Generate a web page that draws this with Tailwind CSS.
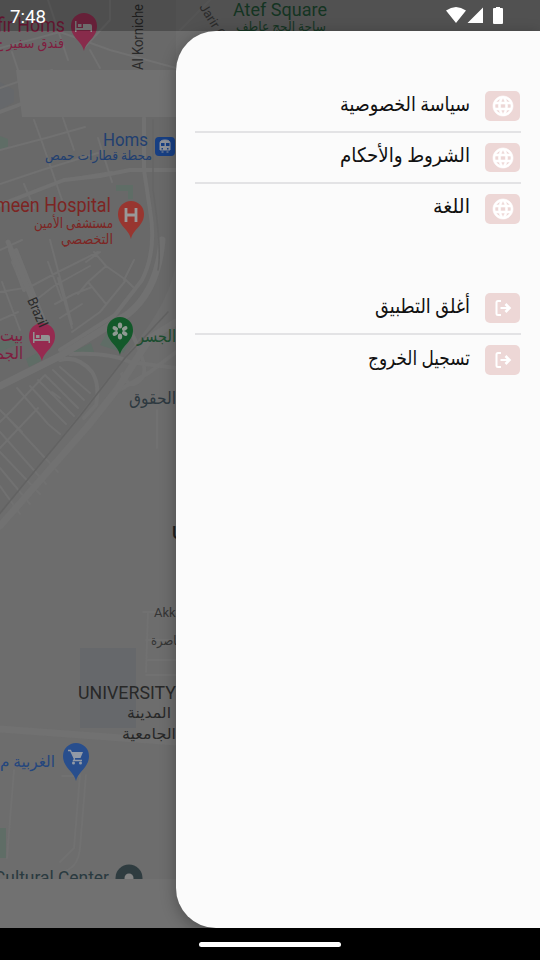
<!DOCTYPE html>
<html lang="ar">
<head>
<meta charset="utf-8">
<meta name="viewport" content="width=device-width, initial-scale=1">
<title>القائمة</title>
<script src="https://cdn.jsdelivr.net/npm/@tailwindcss/browser@4"></script>
</head>
<body class="bg-black">
<div class="relative flex h-[960px] w-[540px] flex-col overflow-hidden bg-black font-['Roboto','DejaVu_Sans',sans-serif]">
  <!-- dimmed map -->
  <svg class="absolute left-0 top-0 h-[928px] w-[540px]" viewBox="0 0 540 928">
    <defs>
      <clipPath id="mapclip"><rect width="540" height="879"/></clipPath>
      <path id="pin" d="M0 0C-2-10-13-13-13-25a13 13 0 0 1 26 0C13-13 2-10 0 0Z"/>
    </defs>
    <rect width="540" height="928" fill="#6d6d6d"/>
    <g clip-path="url(#mapclip)">
      <path d="M0 0H176V260Q172 300 130 350L0 515Z" fill="#696969"/>
      <path d="M80 648h56v80H80ZM0 82l14 8v12L0 110Z" fill="#66686b"/>
      <g fill="#5f6d66"><path d="M0 136l8 3v9l-8 2zM116 185h17v14h-5v-8h-12zM0 342l10-4 8 6-18 8zM26 359l11-6 4 8-12 6zM72 352l19-9 3 9zM100 345l8-14 20 12-4 10z"/><path d="M0 828h6v30H0z"/></g>
      <g fill="none" stroke="#717171" stroke-linecap="round" stroke-linejoin="round">
        <g stroke-width="2">
          <path d="M0 48L60 32L110 50L176 68M0 88L52 70M48 0L68 60M84 48L110 20V0M90 50L100 68M12 52L20 76M180 30L210 0"/>
          <path d="M0 184L42 170L98 153M24 184L34 208M34 120L42 142L62 200M63 118L74 150M0 150L46 138L85 127M98 138L112 182M62 180L112 172"/>
          <path d="M0 250L22 240M12 262L24 290L58 272L98 252M0 292L24 288M36 300L54 286L90 266M48 262L62 300M50 240L72 324M58 278L72 328M94 252L106 266L126 280L134 288M106 266L88 282L78 294M88 282L106 304M100 252L86 262M55 304L74 294L92 287M60 318L82 304M126 280L100 312L72 332M134 260L124 280M0 320L18 312M2 282L20 330"/>
          <path d="M0 410L22 432M17 388L48 424L60 434M30 386L52 410L66 424M38 380L74 416M45 375L78 408M53 370L84 400M60 367L90 393M0 422L10 412L44 376M8 418L58 472M0 432L46 484M0 452L40 494M0 468L30 504M0 486L20 514M38 408L0 448M60 398L52 392"/>
          <path d="M157 410V448M143 612H176M148 612L146 672M148 660H176M146 640H176M146 675H176M14 770L7 858M86 775L80 848Q78 870 60 872M80 775L74 848L60 862M62 776H80"/>
        </g>
        <g stroke-width="4">
          <path d="M0 112L16 106L36 98M10 250L24 290M16 250L44 320M12 250L28 285M0 205L64 180L100 176L130 170H176M144 118V170L150 210Q157 250 142 280L115 315L60 350"/>
          <path d="M60 360Q78 355 92 372Q100 384 96 405L84 418M130 330Q150 368 142 378Q130 392 122 374M176 352L150 372L116 392"/>
          <path d="M70 354Q110 352 130 362L176 368"/>
        </g>
        <path d="M8 242L22 275L40 318" stroke-width="5"/>
        <path d="M162 240Q158 290 128 314L60 356L0 386M0 526L88 426L118 388L150 338L176 322M0 729L176 742" stroke-width="7"/>
        <path d="M-4 518L80 416L125 358L168 312" stroke="#626262" stroke-width="1.500"/>
        <path d="M153 120V190Q162 250 158 270" stroke="#656565" stroke-width="1.500"/>
      </g>
      <path d="M16 70H176V117H22Z" fill="#717171"/>

      <g fill="#7f1d3f">
        <text x="-3" y="32" font-size="20" textLength="68" lengthAdjust="spacingAndGlyphs">fir Homs</text>
        <text x="-5" y="48" font-size="14" textLength="69" lengthAdjust="spacingAndGlyphs">فندق سفير ح</text>
        <g fill="#882b4b"><use href="#pin" x="84" y="51"/></g>
        <g fill="#962a50"><use href="#pin" x="42" y="361"/></g>
        <text x="0" y="341" font-size="17" textLength="23" lengthAdjust="spacingAndGlyphs">بيت</text>
        <text x="-5" y="359" font-size="17" textLength="28" lengthAdjust="spacingAndGlyphs">الجم</text>
      </g>
      <g fill="#929292"><path id="bed" d="M75 21h1.500v7H83v-4h7q2 0 2 2v6h-1.500v-2h-14v2H75ZM78 24h3.500v3H78Z"/><use href="#bed" x="-42" y="311"/></g>
      <text transform="translate(143 70) rotate(-90)" font-size="14" fill="#292929" textLength="66" lengthAdjust="spacingAndGlyphs">Al Korniche</text>
      <text transform="translate(199 7) rotate(58)" font-size="13" fill="#3a3a3a">Jarir Q</text>
      <g fill="#1b462e">
        <text x="233" y="16" font-size="18.500" textLength="94" lengthAdjust="spacingAndGlyphs">Atef Square</text>
        <text x="236" y="31" font-size="13" textLength="90" lengthAdjust="spacingAndGlyphs">ساحة الحج عاطف</text>
      </g>
      <g fill="#213f70">
        <text x="103" y="146" font-size="18" textLength="45" lengthAdjust="spacingAndGlyphs">Homs</text>
        <text x="45" y="160" font-size="13" textLength="107" lengthAdjust="spacingAndGlyphs">محطة قطارات حمص</text>
      </g>
      <rect x="155" y="137" width="20" height="19" rx="4" fill="#173f83"/>
      <path d="M160 150V143Q160 140 165 140T170 143V150ZM161.500 152h2M166.500 152h2" fill="#8e9299" stroke="#8e9299"/>
      <path d="M161 143h3.500v3H161zM166 143h3.500v3H166zM161.500 148h1.500v1.500h-1.500zM167 148h1.500v1.500h-1.500z" fill="#173f83"/>
      <g fill="#7d2523">
        <text x="-5" y="212" font-size="20" textLength="116" lengthAdjust="spacingAndGlyphs">meen Hospital</text>
        <text x="34" y="228" font-size="14" textLength="79" lengthAdjust="spacingAndGlyphs">مستشفى الأمين</text>
        <text x="61" y="244" font-size="14" textLength="52" lengthAdjust="spacingAndGlyphs">التخصصي</text>
      </g>
      <use href="#pin" x="131" y="239" fill="#983630"/>
      <path d="M126 208V222M136 208V222M126 215H136" stroke="#999" stroke-width="2.800"/>
      <text transform="translate(27 300) rotate(66)" font-size="14" fill="#292929" textLength="31" lengthAdjust="spacingAndGlyphs">Brazil</text>
      <use href="#pin" x="120" y="355" fill="#13592a"/>
      <g fill="#8f9a92"><ellipse cx="120" cy="325.500" rx="2.200" ry="3"/><ellipse cx="120" cy="336.500" rx="2.200" ry="3"/><ellipse cx="115.300" cy="328.500" rx="3" ry="2" transform="rotate(30 115.300 328.500)"/><ellipse cx="124.700" cy="328.500" rx="3" ry="2" transform="rotate(-30 124.700 328.500)"/><ellipse cx="115.300" cy="333.500" rx="3" ry="2" transform="rotate(-30 115.300 333.500)"/><ellipse cx="124.700" cy="333.500" rx="3" ry="2" transform="rotate(30 124.700 333.500)"/></g>
      <text x="137" y="342" font-size="17" fill="#1c4d30" textLength="39" lengthAdjust="spacingAndGlyphs">الجسر</text>
      <text x="129" y="404" font-size="17" fill="#2d3940" textLength="47" lengthAdjust="spacingAndGlyphs">الحقوق</text>
      <text x="172" y="539" font-size="18" font-weight="500" fill="#202020">U</text>
      <text x="154" y="617" font-size="13" fill="#353535">Akka</text>
      <text x="151" y="645" font-size="12.500" fill="#353535" textLength="29" lengthAdjust="spacingAndGlyphs">ناصرة</text>
      <g fill="#282828">
        <text x="78" y="699" font-size="18.500" textLength="98" lengthAdjust="spacingAndGlyphs">UNIVERSITY</text>
        <text x="127" y="718" font-size="15" textLength="44" lengthAdjust="spacingAndGlyphs">المدينة</text>
        <text x="122" y="739" font-size="15" textLength="54" lengthAdjust="spacingAndGlyphs">الجامعية</text>
      </g>
      <text x="0" y="767" font-size="16" fill="#24467e" textLength="55" lengthAdjust="spacingAndGlyphs">الغربية م</text>
      <use href="#pin" x="76" y="781" fill="#284e8d"/>
      <path d="M68 750.500h2.500l4 8.500-1 1.500H82" fill="none" stroke="#929aa6" stroke-width="1.300"/><path d="M71.500 752H83l-2.500 6H74Z" fill="#929aa6"/><circle cx="73.500" cy="763" r="1.500" fill="#929aa6"/><circle cx="80.500" cy="763" r="1.500" fill="#929aa6"/>
      <text x="-6" y="884" font-size="18.500" fill="#2a3a40" textLength="115" lengthAdjust="spacingAndGlyphs">Cultural Center</text>
      <circle cx="129" cy="878" r="13.500" fill="#2f3c40"/><circle cx="129" cy="878" r="4.500" fill="#828282"/>
    </g>
    <rect y="879" width="540" height="49" fill="#717171"/>
    <rect width="540" height="31" fill="#000" fill-opacity=".25"/>
  </svg>

  <!-- status bar -->
  <header class="relative flex h-[31px] shrink-0 items-center justify-between pl-[10px] pr-[36px] text-white">
    <svg class="h-[31px] w-10" viewBox="0 0 40 31"><text x="0" y="23" font-size="18.500" fill="#fff" textLength="36" lengthAdjust="spacingAndGlyphs">7:48</text></svg>
    <svg class="h-[31px] w-[58px]" viewBox="446 0 58 31" fill="#fff"><path d="M446 10.500Q456 3.500 466 10.500L456 23ZM467.500 23L483 7.500V23ZM493 9q0-1 1-1h2V7h4v1h2q1 0 1 1v14q0 1-1 1h-8q-1 0-1-1Z"/></svg>
  </header>

  <!-- drawer -->
  <main class="relative ml-[176px] flex h-[897px] flex-col rounded-l-[40px] bg-[#fbfbfb] pl-[19px] pr-[19px] pt-[50px] shadow-[0_4px_16px_rgba(0,0,0,0.3)]">
    <svg class="hidden">
      <symbol id="globe" viewBox="0 0 24 24"><path d="M11.990 2C6.470 2 2 6.480 2 12s4.470 10 9.990 10C17.520 22 22 17.520 22 12S17.520 2 11.990 2zm6.930 6h-2.950a15.650 15.650 0 0 0-1.380-3.560A8.030 8.030 0 0 1 18.920 8zM12 4.040c.83 1.200 1.480 2.530 1.910 3.960h-3.820c.43-1.430 1.080-2.760 1.910-3.960zM4.260 14C4.100 13.360 4 12.690 4 12s.1-1.360.26-2h3.380c-.08.66-.14 1.320-.14 2s.06 1.340.14 2H4.260zm.82 2h2.950c.32 1.250.78 2.450 1.380 3.560A7.990 7.990 0 0 1 5.080 16zm2.950-8H5.080a7.990 7.990 0 0 1 4.330-3.560A15.650 15.650 0 0 0 8.030 8zM12 19.960c-.83-1.200-1.480-2.530-1.910-3.960h3.820c-.43 1.430-1.080 2.760-1.910 3.960zM14.340 14H9.660c-.09-.66-.16-1.320-.16-2s.07-1.350.16-2h4.680c.09.65.16 1.320.16 2s-.07 1.340-.16 2zm.25 5.560c.6-1.110 1.060-2.310 1.380-3.560h2.950a8.030 8.030 0 0 1-4.330 3.560zM16.360 14c.08-.66.14-1.320.14-2s-.06-1.340-.14-2h3.380c.16.640.26 1.310.26 2s-.1 1.360-.26 2h-3.380z" stroke="#fff" stroke-width=".6"/></symbol>
      <symbol id="exit" viewBox="0 0 18 18"><path d="M7 2H4Q2.500 2 2.500 3.500V14.500Q2.500 16 4 16H7M6.500 9H15" fill="none" stroke="#fff" stroke-width="2"/><path d="M11.500 5L15.500 9L11.500 13" fill="none" stroke="#fff" stroke-width="2.600"/></symbol>
    </svg>
    <nav class="flex flex-col">
      <a class="flex h-[52px] items-start justify-end gap-[15px] border-b-2 border-[#e3e3e5] pr-px pt-[10px]">
        <svg class="-mt-[4px] h-9 w-[130px] overflow-visible" viewBox="0 0 130 36" fill="#111"><text x="0" y="24" font-size="20" textLength="130" lengthAdjust="spacingAndGlyphs">سياسة الخصوصية</text></svg>
        <span class="flex h-[30px] w-[35px] items-center justify-center rounded-[5px] bg-[#edd7d6]"><svg class="h-6 w-6" fill="#fff"><use href="#globe"/></svg></span>
      </a>
      <a class="flex h-[51px] items-start justify-end gap-[15px] border-b-2 border-[#e3e3e5] pr-px pt-[10px]">
        <svg class="-mt-[5px] h-9 w-[130px] overflow-visible" viewBox="0 0 130 36" fill="#111"><text x="0" y="24" font-size="20" textLength="130" lengthAdjust="spacingAndGlyphs">الشروط والأحكام</text></svg>
        <span class="flex h-[29px] w-[35px] items-center justify-center rounded-[5px] bg-[#edd7d6]"><svg class="h-6 w-6" fill="#fff"><use href="#globe"/></svg></span>
      </a>
      <a class="flex h-[50px] items-start justify-end gap-[15px] pr-px pt-[10px]">
        <svg class="-mt-[5px] h-9 w-[37px] overflow-visible" viewBox="0 0 37 36" fill="#111"><text x="0" y="24" font-size="20" textLength="37" lengthAdjust="spacingAndGlyphs">اللغة</text></svg>
        <span class="flex h-[30px] w-[35px] items-center justify-center rounded-[5px] bg-[#edd7d6]"><svg class="h-6 w-6" fill="#fff"><use href="#globe"/></svg></span>
      </a>
    </nav>
    <nav class="mt-[49px] flex flex-col">
      <a class="flex h-[52px] items-start justify-end gap-[15px] border-b-2 border-[#e3e3e5] pr-px pt-[10px]">
        <svg class="-mt-[4px] h-9 w-[95px] overflow-visible" viewBox="0 0 95 36" fill="#111"><text x="0" y="24" font-size="20" textLength="95" lengthAdjust="spacingAndGlyphs">أغلق التطبيق</text></svg>
        <span class="flex h-[30px] w-[35px] items-center justify-center rounded-[5px] bg-[#edd7d6]"><svg class="h-[18px] w-[18px]"><use href="#exit"/></svg></span>
      </a>
      <a class="flex h-[50px] items-start justify-end gap-[15px] pr-px pt-[10px]">
        <svg class="-mt-[4px] h-9 w-[102px] overflow-visible" viewBox="0 0 102 36" fill="#111"><text x="0" y="24" font-size="20" textLength="102" lengthAdjust="spacingAndGlyphs">تسجيل الخروج</text></svg>
        <span class="flex h-[30px] w-[35px] items-center justify-center rounded-[5px] bg-[#edd7d6]"><svg class="h-[18px] w-[18px]"><use href="#exit"/></svg></span>
      </a>
    </nav>
  </main>

  <!-- gesture bar -->
  <footer class="relative flex h-8 shrink-0 items-center justify-center bg-black"><span class="h-[5px] w-[142px] rounded-full bg-white"></span></footer>
</div>
</body>
</html>
